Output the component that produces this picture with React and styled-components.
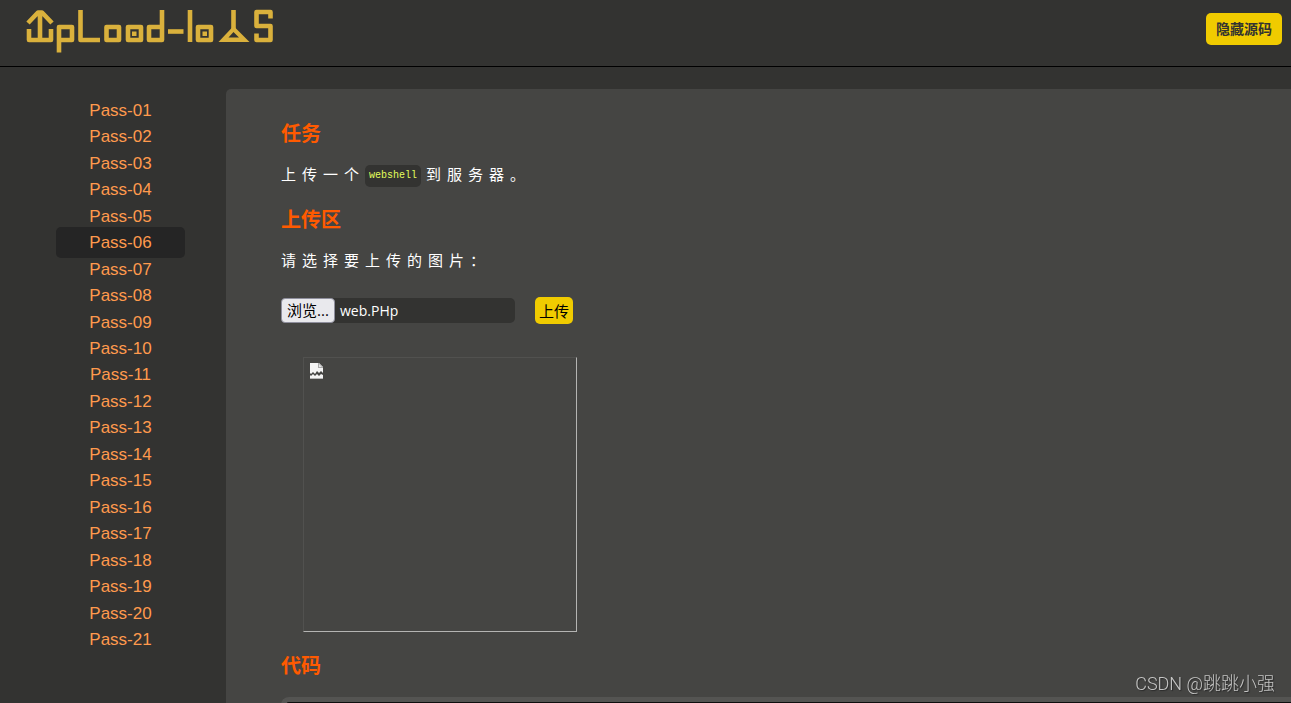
import React, { useState } from "react";
import styled, { createGlobalStyle } from "styled-components";

const GlobalStyle = createGlobalStyle`
  * {
    box-sizing: border-box;
  }
  body {
    margin: 0;
    background-color: #333331;
    font-family: "Liberation Sans", "Noto Sans CJK SC", sans-serif;
  }
`;

const Page = styled.div`
  display: flex;
  flex-direction: column;
  height: 100vh;
  overflow: hidden;
`;

const Header = styled.header`
  display: flex;
  flex: none;
  justify-content: space-between;
  align-items: flex-start;
  padding: 9px 9px 13px 26px;
  border-bottom: 1px solid #000;
`;

const LogoLink = styled.a`
  display: block;
  svg {
    display: block;
  }
`;

const Button = styled.button`
  border: none;
  border-radius: 5px;
  background-color: #f0cb00;
  font-family: "Noto Sans CJK SC", sans-serif;
  font-size: 15px;
  cursor: pointer;
`;

const SourceButton = styled(Button)`
  height: 32px;
  margin-top: 4px;
  padding: 0 10px 3px;
  color: #333331;
  font-size: 14px;
  font-weight: bold;
`;

const Body = styled.div`
  display: flex;
  flex: 1;
  min-height: 0;
  padding-top: 22px;
`;

const Sidebar = styled.nav`
  flex: none;
  width: 226px;
  padding: 8px 41px 0 56px;
`;

const PassList = styled.ul`
  display: grid;
  grid-auto-rows: 1fr;
  height: 556px;
  margin: 0;
  padding: 0;
  list-style: none;
`;

const PassItem = styled.li`
  display: flex;
  align-items: center;
  min-height: 0;
  height: 100%;
`;

const PassLink = styled.a`
  flex: 1;
  margin: -4px 0;
  border-radius: 5px;
  background-color: ${props => (props.$active ? "#252525" : "transparent")};
  color: #ff9a4d;
  font-size: 17px;
  line-height: 31px;
  text-align: center;
  text-decoration: none;
`;

const Content = styled.main`
  flex: 1;
  min-width: 0;
  padding: 30px 0 0 55px;
  border-radius: 5px 0 0 0;
  background-color: #454543;
`;

const Title = styled.h2`
  margin: 0;
  color: #ff5a00;
  font-family: "Noto Sans CJK SC", sans-serif;
  font-size: 20px;
  font-weight: bold;
  line-height: 28px;
`;

const Text = styled.p`
  margin: 0;
  padding: 11px 0 15px;
  color: #fff;
  font-family: "Noto Sans CJK SC", sans-serif;
  font-size: 15px;
  line-height: 32px;
  letter-spacing: 6px;
`;

const Code = styled.code`
  display: inline-block;
  margin-right: 5px;
  padding: 0 4px;
  border-radius: 5px;
  background-color: #333331;
  color: #e3ff5c;
  font-family: "Liberation Mono", monospace;
  font-size: 10px;
  line-height: 22px;
  letter-spacing: normal;
  vertical-align: middle;
`;

const UploadForm = styled.form`
  display: flex;
  align-items: center;
  gap: 20px;
  padding-top: 6px;
`;

const FilePicker = styled.label`
  display: flex;
  align-items: center;
  gap: 5px;
  width: 234px;
  height: 25px;
  border-radius: 5px;
  background-color: #333331;
  color: #fff;
  font-family: "Open Sans", "Noto Sans CJK SC", sans-serif;
  font-size: 14px;
  cursor: pointer;
`;

const FileInput = styled.input`
  position: absolute;
  width: 1px;
  height: 1px;
  opacity: 0;
`;

const Browse = styled.span`
  width: 54px;
  height: 25px;
  border: 1px solid #8f8f9d;
  border-radius: 4px;
  background-color: #e9e9ed;
  color: #000;
  font-size: 15px;
  line-height: 23px;
  text-align: center;
  white-space: nowrap;
`;

const SubmitButton = styled(Button)`
  height: 27px;
  padding: 0 4px;
  color: #000;
`;

const Preview = styled.div`
  width: 274px;
  height: 275px;
  margin: 33px 22px 19px;
  padding: 5px 6px;
  border: 1px solid;
  border-color: #51514f #b4b4b3 #b4b4b3 #51514f;
`;

const SourceCode = styled.pre`
  height: 200px;
  margin: 18px 0 0;
  border: 5px solid #545452;
  border-right: none;
  border-radius: 8px 0 0 0;
  background-color: #0d0d0d;
`;

const Watermark = styled.div`
  position: fixed;
  right: 16px;
  bottom: 6px;
  color: #c6c6c5;
  font-family: Roboto, "Noto Sans CJK SC", sans-serif;
  font-size: 18px;
  font-weight: 300;
  line-height: 26px;
  text-shadow: 1px 1px 1px #2a2a2a;
`;

const passes = Array.from({ length: 21 }, (_, i) => `Pass-${String(i + 1).padStart(2, "0")}`);

const Logo = () => (
  <svg width="249" height="44" viewBox="26 9 249 44" fill="none" stroke="#dab13c" strokeWidth="4.6" strokeLinejoin="round">
    <path d="M29 29V40H51V29M40 40V13M28 23L38 12.5H42L52 23" />
    <path d="M59 52.5V27H72V40H59" />
    <path d="M80.5 10V40H100" />
    <path d="M106.5 27H119V40H106.5Z" />
    <path d="M128 27H141V40H128Z" />
    <path d="M162 10V40H149V27H162" />
    <path d="M168 31.5H183.5" />
    <path d="M190 10V42" />
    <path d="M198 27H211V40H198Z" />
    <path d="M233.5 10V30" />
    <path
      d="M233.5 26L249.5 42H218.5ZM233.5 32L228.5 37.5H239Z"
      fill="#dab13c"
      fillRule="evenodd"
      stroke="none"
    />
    <path d="M270.5 18.5V12H256.5V26H270.5V40H256.5V33.5" />
    <path d="M132 31.5H136.5V36H132ZM202.5 31.5H207V36H202.5Z" fill="#dab13c" stroke="none" />
  </svg>
);

const BrokenImage = () => (
  <svg width="14" height="17" viewBox="0 0 14 17">
    <path d="M0 0H9L13 4V10L11 8L9 10L7 8L5 11L3 9L1 11L0 10Z" fill="#f4f4f4" />
    <path d="M8 0H9L13 4V5H8Z" fill="#a9a9a9" />
    <path d="M9 1L12 4H9Z" fill="#e4e4e4" />
    <path d="M0 12L1 13L3 11L5 13L7 11L9 13L11 11L13 12V16H0Z" fill="#f4f4f4" />
    <path d="M0 15H13V16H0Z" fill="#b5b5b5" />
  </svg>
);

const App = () => {
  const [active, setActive] = useState("Pass-06");
  const [showSource, setShowSource] = useState(true);
  const [fileName, setFileName] = useState("web.PHp");

  const handleFile = e => {
    if (e.target.files[0]) {
      setFileName(e.target.files[0].name);
    }
  };

  return (
    <Page>
      <GlobalStyle />
      <Header>
        <LogoLink href="#" aria-label="upload-labs">
          <Logo />
        </LogoLink>
        <SourceButton type="button" onClick={() => setShowSource(!showSource)}>
          {showSource ? "隐藏源码" : "显示源码"}
        </SourceButton>
      </Header>
      <Body>
        <Sidebar>
          <PassList>
            {passes.map(pass => (
              <PassItem key={pass}>
                <PassLink href={`#${pass}`} $active={pass === active} onClick={() => setActive(pass)}>
                  {pass}
                </PassLink>
              </PassItem>
            ))}
          </PassList>
        </Sidebar>
        <Content>
          <Title>任务</Title>
          <Text>
            上传一个<Code>webshell</Code>到服务器。
          </Text>
          <Title>上传区</Title>
          <Text>请选择要上传的图片：</Text>
          <UploadForm onSubmit={e => e.preventDefault()}>
            <FilePicker>
              <FileInput type="file" onChange={handleFile} />
              <Browse>浏览...</Browse>
              <span>{fileName}</span>
            </FilePicker>
            <SubmitButton type="submit">上传</SubmitButton>
          </UploadForm>
          <Preview>
            <BrokenImage />
          </Preview>
          {showSource && (
            <>
              <Title>代码</Title>
              <SourceCode />
            </>
          )}
        </Content>
      </Body>
      <Watermark>CSDN @跳跳小强</Watermark>
    </Page>
  );
};

export default App;
